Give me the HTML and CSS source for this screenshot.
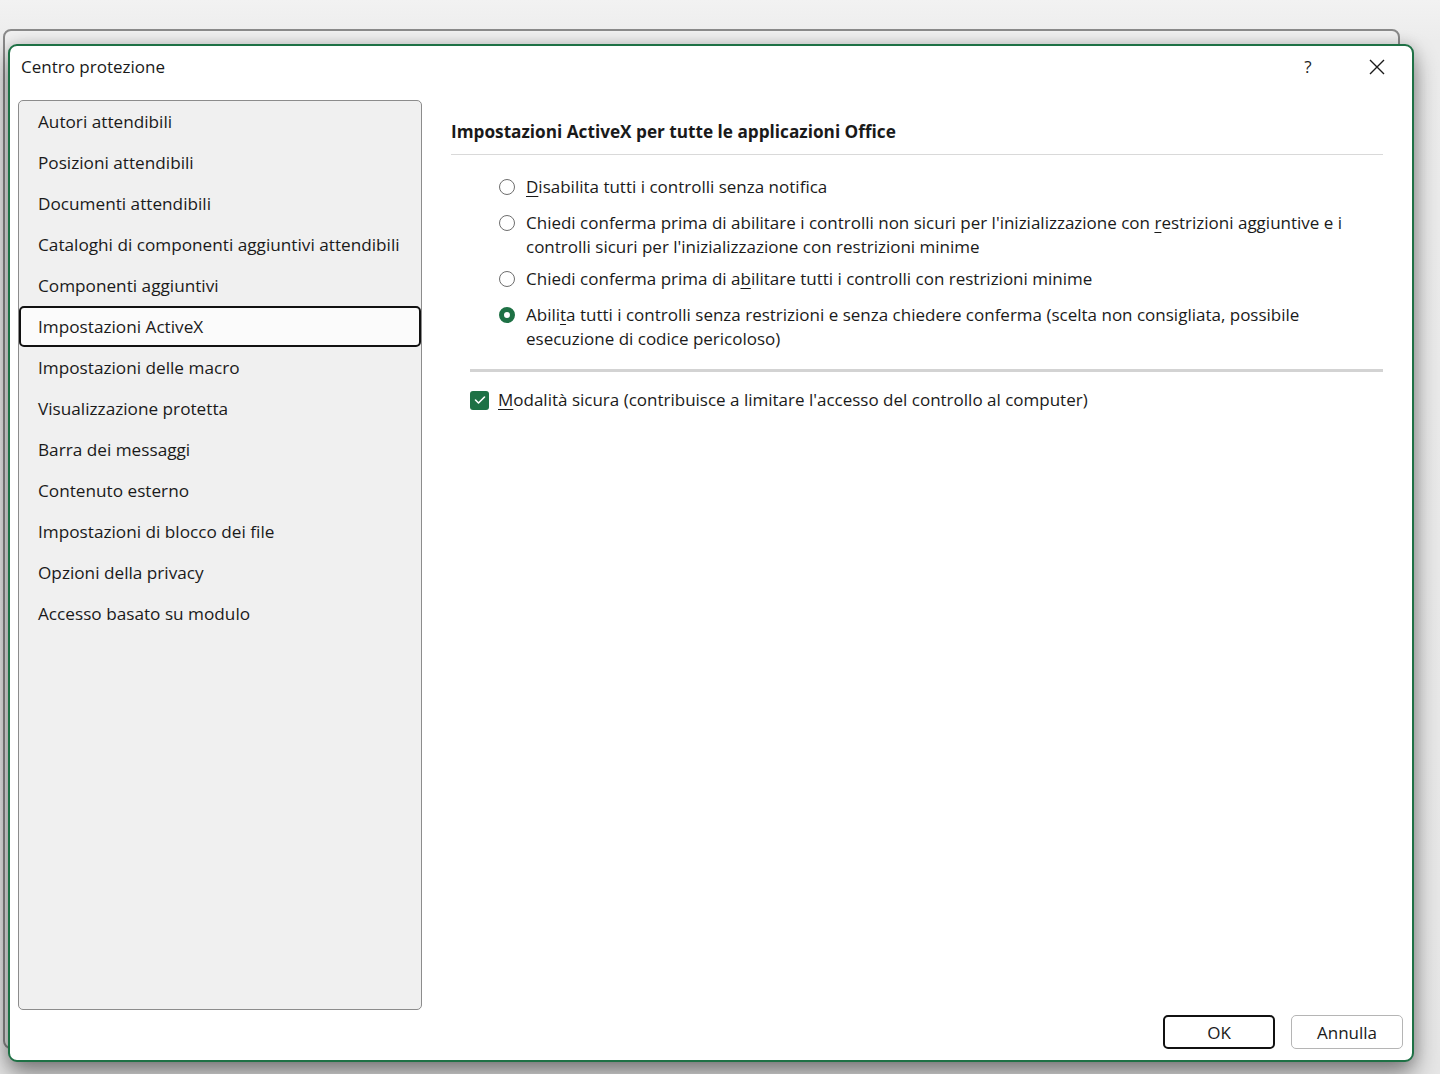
FILE: index.html
```html
<!DOCTYPE html>
<html lang="it">
<head>
<meta charset="utf-8">
<title>Centro protezione</title>
<link rel="stylesheet" href="styles.css">
</head>
<body>
<div class="backwin"></div>
<div class="dialog">
  <div class="titlebar">
    <div class="title">Centro protezione</div>
    <div class="tb-buttons">
      <span class="help">?</span>
      <span class="close"><svg width="16" height="16" viewBox="0 0 16 16"><path d="M1 1 L15 15 M15 1 L1 15" stroke="#1a1a1a" stroke-width="1.4" fill="none"/></svg></span>
    </div>
  </div>
  <div class="body">
    <ul class="nav">
      <li>Autori attendibili</li>
      <li>Posizioni attendibili</li>
      <li>Documenti attendibili</li>
      <li>Cataloghi di componenti aggiuntivi attendibili</li>
      <li>Componenti aggiuntivi</li>
      <li class="selected">Impostazioni ActiveX</li>
      <li>Impostazioni delle macro</li>
      <li>Visualizzazione protetta</li>
      <li>Barra dei messaggi</li>
      <li>Contenuto esterno</li>
      <li>Impostazioni di blocco dei file</li>
      <li>Opzioni della privacy</li>
      <li>Accesso basato su modulo</li>
    </ul>
    <div class="content">
      <h2 class="heading">Impostazioni ActiveX per tutte le applicazioni Office</h2>
      <div class="radios">
        <div class="radio"><span class="circle"></span><span class="label"><u>D</u>isabilita tutti i controlli senza notifica</span></div>
        <div class="radio two"><span class="circle"></span><span class="label">Chiedi conferma prima di abilitare i controlli non sicuri per l'inizializzazione con <u>r</u>estrizioni aggiuntive e i controlli sicuri per l'inizializzazione con restrizioni minime</span></div>
        <div class="radio"><span class="circle"></span><span class="label">Chiedi conferma prima di a<u>b</u>ilitare tutti i controlli con restrizioni minime</span></div>
        <div class="radio"><span class="circle checked"></span><span class="label">Abili<u>t</u>a tutti i controlli senza restrizioni e senza chiedere conferma (scelta non consigliata, possibile esecuzione di codice pericoloso)</span></div>
      </div>
      <div class="sep2"></div>
      <div class="check">
        <span class="box"><svg width="12" height="10" viewBox="0 0 12 10"><path d="M1.5 5 L4.5 8 L10.5 2" stroke="#fff" stroke-width="1.6" fill="none" stroke-linecap="round" stroke-linejoin="round"/></svg></span>
        <span class="label"><u>M</u>odalità sicura (contribuisce a limitare l'accesso del controllo al computer)</span>
      </div>
    </div>
  </div>
  <div class="footer">
    <button class="btn primary">OK</button>
    <button class="btn">Annulla</button>
  </div>
</div>
</body>
</html>
```
FILE: styles.css
```css
html, body {
  margin: 0;
  padding: 0;
}
body {
  width: 1440px;
  height: 1074px;
  overflow: hidden;
  background: linear-gradient(#f2f2f2, #ececec 40px, #e6e6e6);
  font-family: "Open Sans", "Noto Sans", sans-serif;
  color: #1a1a1a;
  position: relative;
}
.backwin {
  position: absolute;
  left: 3px;
  top: 29px;
  width: 1393px;
  height: 1016px;
  border: 2px solid #8a8a8a;
  border-radius: 8px;
  background: #f0f0f0;
}
.dialog {
  position: absolute;
  left: 8px;
  top: 44px;
  width: 1402px;
  height: 1014px;
  border: 2px solid #1e7145;
  border-radius: 9px;
  background: #fff;
  box-shadow: 0 12px 24px rgba(0,0,0,0.45), 0 0 14px rgba(0,0,0,0.14);
  display: flex;
  flex-direction: column;
}
.titlebar {
  height: 54px;
  display: flex;
  justify-content: space-between;
  align-items: flex-start;
  padding: 10px 0 0 11px;
  box-sizing: border-box;
}
.title {
  font-size: 17px;
  line-height: 22px;
}
.tb-buttons {
  display: flex;
  align-items: center;
  height: 22px;
}
.help {
  font-size: 17px;
  line-height: 22px;
  width: 18px;
  text-align: center;
  margin-right: 52px;
  color: #222;
}
.close {
  display: flex;
  width: 16px;
  height: 16px;
  margin-right: 27px;
}
.body {
  flex: 1;
  display: flex;
  padding-left: 8px;
}
.nav {
  list-style: none;
  margin: 0;
  padding: 0;
  width: 404px;
  height: 910px;
  box-sizing: border-box;
  border: 1px solid #8c8c8c;
  border-radius: 5px;
  background: #f0f0f0;
}
.nav li {
  height: 41px;
  box-sizing: border-box;
  border: 2px solid transparent;
  border-radius: 5px;
  padding-left: 17px;
  display: flex;
  align-items: center;
  font-size: 17.2px;
  white-space: nowrap;
}
.nav li.selected {
  border-color: #111;
  background: #fbfbfb;
}
.content {
  width: 932px;
  margin-left: 29px;
}
.heading {
  margin: 0;
  font-size: 17.2px;
  font-weight: 700;
  line-height: 22px;
  padding-top: 21px;
  padding-bottom: 11px;
  border-bottom: 1px solid #d9d9d9;
}
.radios {
  padding-left: 48px;
  padding-top: 20px;
  display: flex;
  flex-direction: column;
  gap: 12px;
}
.radio {
  display: flex;
  align-items: flex-start;
}
.radio.two {
  margin-bottom: -4px;
}
.circle {
  flex: none;
  width: 16px;
  height: 16px;
  box-sizing: border-box;
  border: 1.5px solid #6e6e6e;
  border-radius: 50%;
  margin-top: 4px;
  margin-right: 11px;
  background: #fff;
}
.circle.checked {
  border: 5px solid #1e7145;
}
.label {
  font-size: 17px;
  line-height: 24px;
}
.radios .label {
  max-width: 835px;
}
u {
  text-decoration-thickness: 1px;
  text-underline-offset: 3px;
}
.sep2 {
  margin-left: 19px;
  margin-top: 18px;
  height: 3px;
  background: #d3d3d3;
}
.check {
  display: flex;
  align-items: center;
  margin-left: 19px;
  margin-top: 16px;
}
.box {
  flex: none;
  width: 19px;
  height: 19px;
  border-radius: 3px;
  background: #1e7145;
  display: flex;
  align-items: center;
  justify-content: center;
  margin-right: 9px;
}
.footer {
  display: flex;
  justify-content: flex-end;
  gap: 16px;
  padding: 0 9px 11px 0;
}
.btn {
  width: 112px;
  height: 34px;
  box-sizing: border-box;
  border: 1px solid #b5b5b5;
  border-radius: 5px;
  background: #fff;
  font-family: "Open Sans", "Noto Sans", sans-serif;
  font-size: 17px;
  color: #1a1a1a;
  padding: 0;
}
.btn.primary {
  border: 2px solid #111;
}
```
